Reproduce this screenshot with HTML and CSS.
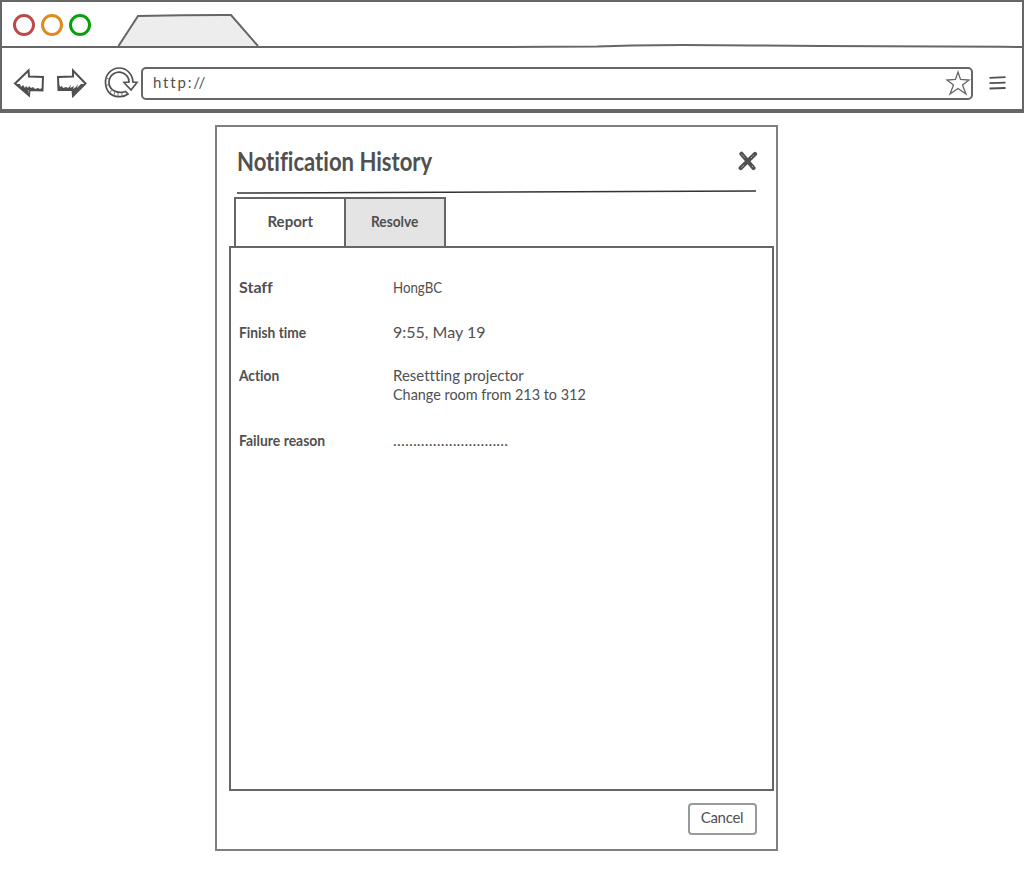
FILE: index.html
```html
<!DOCTYPE html>
<html lang="en">
<head>
<meta charset="utf-8">
<title>Notification History</title>
<link rel="stylesheet" href="styles.css">
</head>
<body>
<header class="browser">
  <div class="strip">
    <span class="dot red"></span><span class="dot orange"></span><span class="dot green"></span>
    <svg class="tab-shape" width="144" height="34" viewBox="0 0 144 34"><path d="M2.500 34L22 4Q70 2.900 115 3L142 34" fill="#ededed" stroke="#666" stroke-width="2"/></svg>
  </div>
  <svg class="divider" width="1020" height="5" viewBox="0 0 1020 5"><path d="M0 3H505L595 2.500L630 1.500L680 1L750 1.500L820 2L1000 2.700L1020 3" fill="none" stroke="#666" stroke-width="2"/></svg>
  <div class="toolbar">
    <svg class="arrow" width="32" height="30" viewBox="0 0 32 30"><path d="M2 15.500L15.500 2.500L16 8.500L30 9L29.500 22.500L16.500 22L16 27.500Z" class="ink"/><path d="M3 16L15 27L15 22H29V20L27 21L25 20L22 21L20 19L18 20L16 18L15 20L13 18L12 20L10 17L8 19L7 16Z" class="hatch"/></svg>
    <svg class="arrow" width="32" height="30" viewBox="0 0 32 30"><path d="M2 9L17 8.500L17 2.500L29.500 15.500L17 28L16.500 22L2.500 22Z" class="ink"/><path d="M3 16L4 19L6 18L7 20L10 19L12 20L15 17L14 20L18 18L17 21L20 19L22 16L21 20L25 16L28 16L17 27L16 22H3Z" class="hatch"/></svg>
    <svg class="reload" width="36" height="34" viewBox="0 0 36 34"><path d="M22.500 25.500C13 28.500 5.500 23 6 16C6.500 8 14 4.500 20 7C24.500 9 26 12 26 16L21 16.500L28 24L34 16.500L30 16C29.500 8 23.500 2 16.500 2C8 2 2 9 2.500 17C3 26 9 31 16 30.500C20 31 23 29.500 25 28Z" fill="#fff" stroke="#505050" stroke-width="1.700"/><path d="M3 12L6 13M3 20L6 18M7 27L9 23M11 29L12 25M15 30V27M19 30V27" fill="none" stroke="#777"/></svg>
    <div class="address"><span class="url">http://</span>
      <svg class="star" width="26" height="26" viewBox="0 0 26 26"><path d="M13 2L15.500 9.500L24 10L17.500 15L21 24L13 18.500L5 24L8.500 15L2 10L10.500 9.500Z" fill="none" stroke="#666" stroke-width="1.300"/></svg>
    </div>
    <svg class="menu" width="20" height="16" viewBox="0 0 20 16"><path d="M1.500 2.800L17.500 2.200M1.500 8.200L17.500 7.700M1.500 13.500L17.500 13" stroke="#505050" stroke-width="1.800"/></svg>
  </div>
</header>
<main class="dialog">
  <div class="heading">
    <h1>Notification History</h1>
    <svg class="close" width="20" height="20" viewBox="0 0 20 20"><path d="M3.500 2.800L15.500 17M17 3L2.700 17" stroke="#505050" stroke-width="4.200" stroke-linecap="round"/><path d="M4 3.500L7 7M13 7L16.500 3.500M3.500 16.500L6 14M14 15L15.500 17" stroke="#bbb" stroke-dasharray="1.500 1"/></svg>
  </div>
  <svg class="rule" width="519" height="4" viewBox="0 0 519 4"><path d="M0 3L519 1" stroke="#333" stroke-width="1.400"/></svg>
  <nav class="tabs"><span class="tab"><b class="t-report">Report</b></span><span class="tab active"><b class="t-resolve">Resolve</b></span></nav>
  <section class="panel">
    <dl>
      <dt class="l-staff">Staff</dt><dd class="v-staff">HongBC</dd>
      <dt class="l-time">Finish time</dt><dd class="v-time">9:55, May 19</dd>
      <dt class="l-action">Action</dt><dd><span class="line-a">Resettting projector</span><span class="line-b">Change room from 213 to 312</span></dd>
      <dt class="l-reason">Failure reason</dt><dd class="dots">.............................</dd>
    </dl>
  </section>
  <footer><button>Cancel</button></footer>
</main>
</body>
</html>
```
FILE: styles.css
```css
* { box-sizing: border-box; }
body { margin: 0; background: #fff; color: #505050; font: 16px/19px Lato, sans-serif; font-variant-ligatures: none; }
svg { display: block; flex: none; }
.browser { height: 113px; border: 2px solid #666; border-bottom-width: 4px; }
.strip { height: 42px; display: flex; padding-left: 11px; gap: 6px; }
.dot { width: 22px; height: 22px; margin-top: 12px; border: 3px solid; border-radius: 50%; }
.red { border-color: #bc4a4a; }
.orange { border-color: #dd8a20; }
.green { border-color: #06a00d; }
.tab-shape { margin: 10px 0 0 19px; }
.toolbar { height: 60px; display: flex; padding: 18px 0 0 11px; }
.arrow { margin: 1px 11px 0 0; }
.ink { fill: #fff; stroke: #505050; stroke-width: 2; }
.hatch { fill: #505050; }
.reload { margin: -1px 2px 0 4px; }
.address { width: 832px; height: 33px; border: 2px solid #666; border-radius: 5px; display: flex; justify-content: space-between; padding: 1px 0 0 10px; }
.url { padding-top: 2px; font-size: 15px; line-height: 20px; letter-spacing: 1.8px; }
.menu { margin: 8px 0 0 15px; }
.dialog { width: 563px; height: 726px; margin: 12px 0 0 215px; border: 2px solid #808080; }
.heading { height: 63px; display: flex; justify-content: space-between; padding: 18px 18px 0 20px; }
h1 { margin: 0; font-size: 27px; line-height: 32px; transform: scaleX(.817); transform-origin: left; }
.close { margin-top: 6px; }
.rule { margin-left: 20px; }
.tabs { display: flex; height: 49px; margin: 3px 0 0 17px; width: 212px; border: 2px solid #666; border-bottom: 0; }
.tab { width: 108px; padding-top: 12px; text-align: center; }
.tab b { display: inline-block; }
.t-report { transform: scaleX(.94); }
.t-resolve { transform: scaleX(.855); }
.active { flex: 1; background: #e4e4e4; border-left: 2px solid #666; }
.panel { width: 545px; height: 545px; margin-left: 12px; border: 2px solid #666; }
dl { display: grid; grid-template-columns: 154px 1fr; grid-template-rows: 45px 43px 65px 20px; margin: 29px 0 0 8px; }
dt { font-weight: bold; }
dt, dd { margin: 0; transform-origin: left; }
.l-time { transform: scaleX(.86); }
.l-action { transform: scaleX(.86); }
.l-reason { transform: scaleX(.87); }
.v-staff { transform: scaleX(.83); }
.line-a, .line-b { display: block; transform-origin: left; }
.line-a { transform: scaleX(.936); }
.line-b { transform: scaleX(.9); }
.dots { letter-spacing: .2px; }
footer { display: flex; justify-content: flex-end; padding: 12px 19px 0 0; }
button { width: 69px; height: 32px; padding: 0 1px 4px 0; border: 2px solid #999; border-radius: 4px; background: #fff; color: #505050; font: 15px Lato, sans-serif; letter-spacing: -.3px; }
```
